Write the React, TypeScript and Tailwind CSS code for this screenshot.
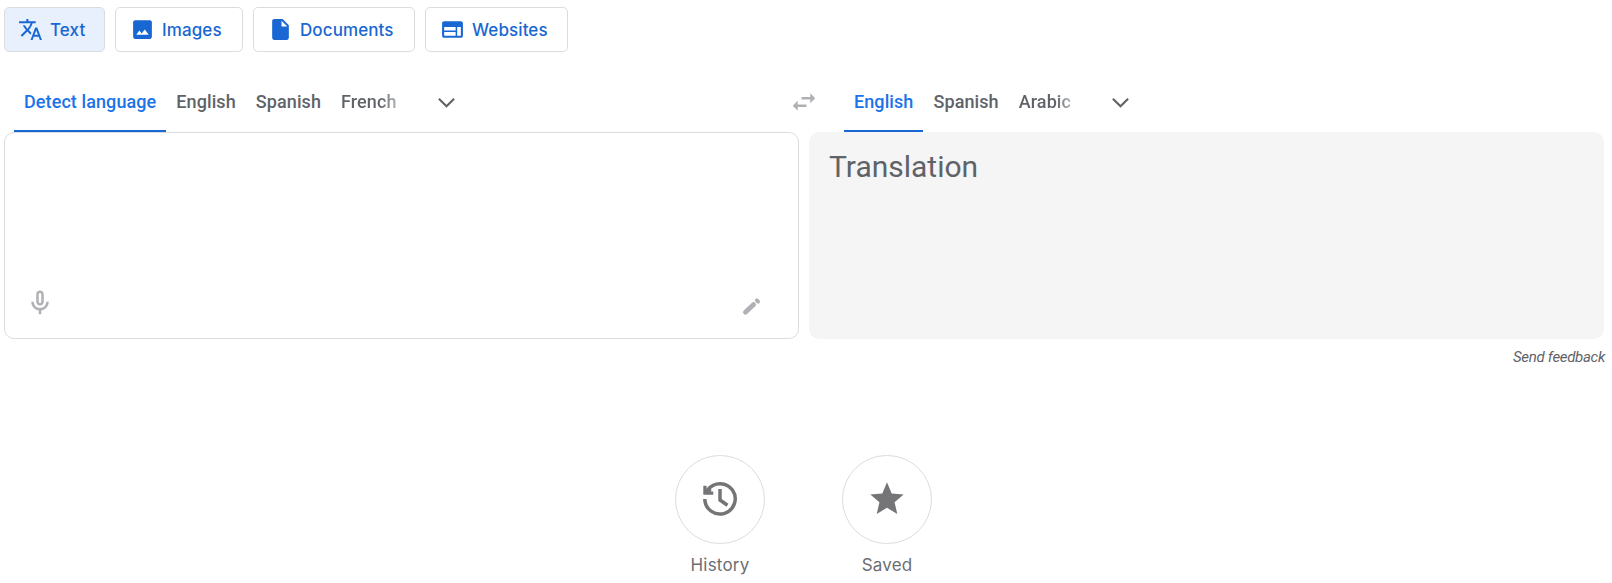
import type { ReactNode } from "react";

type ModeProps = {
  label: string;
  icon: ReactNode;
  className: string;
  active?: boolean;
};

const Icon = ({ d, className }: { d: string; className: string }) => (
  <svg viewBox="0 0 24 24" fill="currentColor" className={`shrink-0 ${className}`}>
    <path d={d} />
  </svg>
);

const paths = {
  translate:
    "M12.87 15.07l-2.54-2.51.03-.03c1.74-1.94 2.98-4.17 3.71-6.53H17V4h-7V2H8v2H1v1.99h11.17C11.5 7.92 10.44 9.75 9 11.35 8.07 10.32 7.3 9.19 6.69 8h-2c.73 1.63 1.73 3.17 2.98 4.56l-5.09 5.02L4 19l5-5 3.11 3.11.76-2.04zM18.5 10h-2L12 22h2l1.12-3h4.75L21 22h2l-4.5-12zm-2.62 7l1.62-4.33L19.12 17h-3.24z",
  image:
    "M19 3H5c-1.1 0-2 .9-2 2v14c0 1.1.9 2 2 2h14c1.1 0 2-.9 2-2V5c0-1.1-.9-2-2-2zM6 17l3-4 2.2 2.8 3-3.8 3.8 5H6z",
  document:
    "M14 2H6c-1.1 0-2 .9-2 2v16c0 1.1.9 2 2 2h12c1.1 0 2-.9 2-2V8l-6-6zm-1 7V3.5L18.5 9H13z",
  web: "M20 4H4c-1.1 0-2 .9-2 2v12c0 1.1.9 2 2 2h16c1.1 0 2-.9 2-2V6c0-1.1-.9-2-2-2zm-5 14H4v-3.5h11V18zm0-5H4V9.5h11V13zm5 5h-3.5V9.5H20V18z",
  swap: "M6.99 11L3 15l3.99 4v-3H14v-2H6.99v-3zM21 9l-3.99-4v3H10v2h7.01v3L21 9z",
  chevron: "M5.41 7.59L4 9l8 8 8-8-1.41-1.41L12 14.17z",
  mic: "M12 14c1.66 0 3-1.34 3-3V5c0-1.66-1.34-3-3-3S9 3.34 9 5v6c0 1.66 1.34 3 3 3zm-1-9c0-.55.45-1 1-1s1 .45 1 1v6c0 .55-.45 1-1 1s-1-.45-1-1V5zm6 6c0 2.76-2.24 5-5 5s-5-2.24-5-5H5c0 3.53 2.61 6.43 6 6.92V21h2v-3.08c3.39-.49 6-3.39 6-6.92h-2z",
  star: "M12 17.27L18.18 21l-1.64-7.03L22 9.24l-7.19-.61L12 2 9.19 8.63 2 9.24l5.46 4.73L5.82 21z",
};

const ModeButton = ({ label, icon, className, active }: ModeProps) => (
  <button
    className={`flex h-[45px] items-center gap-[7px] rounded-[5px] border border-[#dadce0] font-['Inter',sans-serif] text-[17px] font-medium tracking-[0.1px] text-[#1967d2] ${
      active ? "bg-[#e8f0fe] pl-[13px]" : "bg-white pl-[14px]"
    } ${className}`}
  >
    {icon}
    <span className="pt-[2px]">{label}</span>
  </button>
);

const Tab = ({ label, active, fade }: { label: string; active?: boolean; fade?: boolean }) => (
  <button
    className={`flex h-[62px] items-center border-b-2 px-[10px] pt-[3px] text-[18px] font-medium tracking-[0.09px] ${
      active ? "border-[#1967d2] text-[#1a73e8]" : "border-transparent text-[#5f6368]"
    }`}
  >
    <span
      className={
        fade ? "bg-linear-to-r from-[#5f6368] from-70% to-[#b4b6b9] bg-clip-text text-transparent" : ""
      }
    >
      {label}
    </span>
  </button>
);

const HistoryIcon = () => (
  <svg viewBox="0 0 40 40" fill="none" stroke="currentColor" className="size-10">
    <path d="M4.8 20A15.2 15.2 0 1 0 8 10.5" strokeWidth="3.5" />
    <path d="M3.3 6.7H6.6V9.6L10 8L11.5 11.5L10.5 12.4H13.3V15.7H3.3Z" fill="currentColor" stroke="none" />
    <path d="M20 10V21L27.5 26.2" strokeWidth="3.5" />
  </svg>
);

const RoundAction = ({ label, children }: { label: string; children: ReactNode }) => (
  <button className="flex w-[90px] flex-col items-center">
    <span className="flex h-[89px] w-[90px] items-center justify-center rounded-full border border-[#dadce0] pb-[2px] text-[#757578]">
      {children}
    </span>
    <span className="mt-[9px] font-['Inter',sans-serif] text-[17px] leading-6 tracking-[0.2px] text-[#6b6e72]">
      {label}
    </span>
  </button>
);

const App = () => {
  return (
    <div className="h-[583px] w-[1612px] overflow-hidden bg-white px-1 pt-[7px] font-['Roboto',sans-serif]">
      {/* translation modes */}
      <nav className="flex gap-[10px]">
        <ModeButton
          active
          label="Text"
          className="w-[101px]"
          icon={<Icon d={paths.translate} className="size-[25px]" />}
        />
        <ModeButton label="Images" className="w-[128px]" icon={<Icon d={paths.image} className="size-[25px]" />} />
        <ModeButton
          label="Documents"
          className="w-[162px]"
          icon={<Icon d={paths.document} className="size-[25px]" />}
        />
        <ModeButton label="Websites" className="w-[143px]" icon={<Icon d={paths.web} className="size-[25px]" />} />
      </nav>

      {/* language bar */}
      <div className="mt-[18px] flex h-[62px] items-center">
        <div className="flex w-[777px] items-center pl-[10px]">
          <Tab active label="Detect language" />
          <Tab label="English" />
          <Tab label="Spanish" />
          <Tab label="French" fade />
          <Icon d={paths.chevron} className="mt-[2px] ml-[27px] size-[25px] text-[#5f6368]" />
        </div>
        <div className="flex w-[63px] items-center pl-2">
          <Icon d={paths.swap} className="mt-[2px] size-[30px] text-[#b0b1b4]" />
        </div>
        <div className="flex items-center">
          <Tab active label="English" />
          <Tab label="Spanish" />
          <Tab label="Arabic" fade />
          <Icon d={paths.chevron} className="mt-[2px] ml-[27px] size-[25px] text-[#5f6368]" />
        </div>
      </div>

      {/* panels */}
      <main className="flex h-[207px] gap-[10px]">
        <section className="flex w-[795px] items-end justify-between rounded-[10px] border border-[#dadce0] pb-5 pl-5 pr-[34px] text-[#b0b1b4]">
          <Icon d={paths.mic} className="size-[30px]" />
          <svg viewBox="0 0 24 24" className="size-6" stroke="currentColor" fill="none">
            <path d="M5.4 18.2L13.6 10.5" strokeWidth="4.8" strokeLinecap="round" />
            <path d="M16.8 6.3L18.2 7.7" strokeWidth="3.8" strokeLinecap="round" />
          </svg>
        </section>
        <section className="w-[795px] rounded-[10px] bg-[#f5f5f5] px-5 pt-[15px]">
          <p className="text-[30px] leading-10 text-[#5f6368]">Translation</p>
        </section>
      </main>

      <p className="mt-2 pr-[3px] text-right text-[15px] leading-5 tracking-[-0.3px] text-[#5f6368] italic">
        Send feedback
      </p>

      {/* shortcuts */}
      <footer className="mt-[88px] flex gap-[77px] pl-[671px]">
        <RoundAction label="History">
          <HistoryIcon />
        </RoundAction>
        <RoundAction label="Saved">
          <Icon d={paths.star} className="size-10" />
        </RoundAction>
      </footer>
    </div>
  );
};

export default App;
